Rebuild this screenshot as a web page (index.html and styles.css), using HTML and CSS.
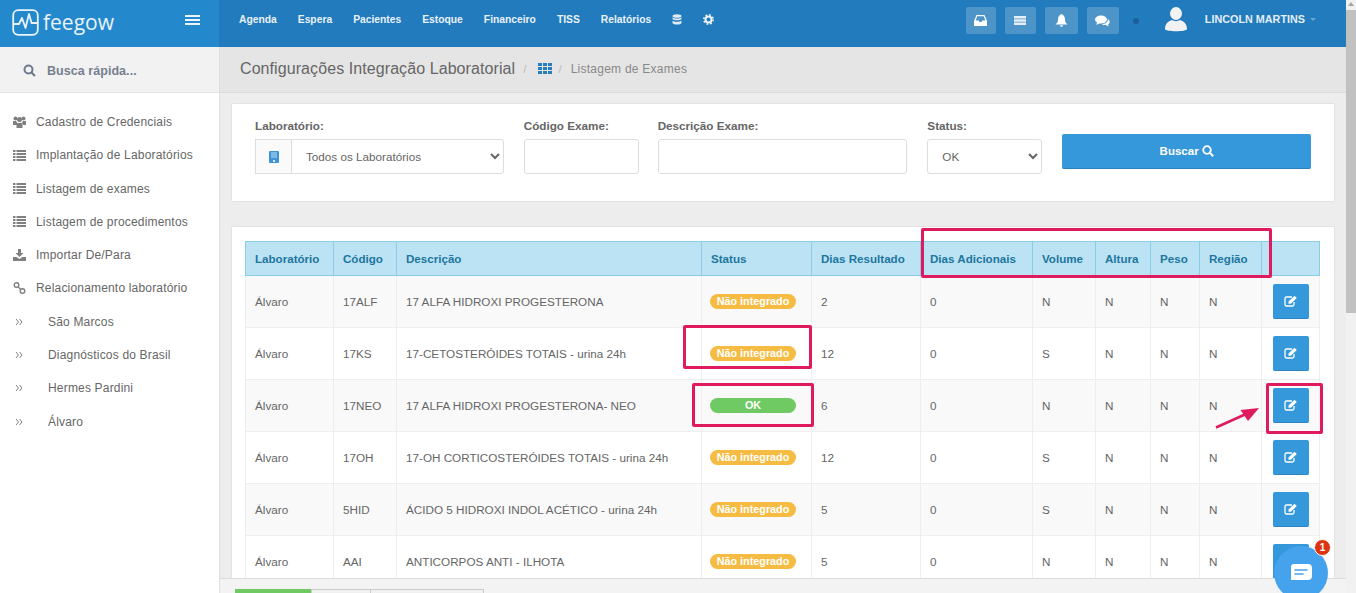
FILE: index.html
```html
<!DOCTYPE html>
<html lang="pt-BR">
<head>
<meta charset="utf-8">
<title>Listagem de Exames</title>
<link rel="stylesheet" href="styles.css">
</head>
<body>
<svg class="defs" width="0" height="0">
  <symbol id="i-list" viewBox="0 0 13 11"><path d="M0 0h2.5v2H0zM3.500 0H13v2H3.500zM0 3h2.500v2H0zM3.500 3H13v2H3.500zM0 6h2.500v2H0zM3.500 6H13v2H3.500zM0 9h2.500v2H0zM3.500 9H13v2H3.500z"/></symbol>
  <symbol id="i-edit" viewBox="0 0 14 12"><path d="M10 7v2.500A1.500 1.500 0 0 1 8.500 11h-6A1.500 1.500 0 0 1 1 9.500v-6A1.500 1.500 0 0 1 2.500 2H8" fill="none" stroke="currentColor" stroke-width="1.300"/><path d="M4.500 6.500 10.500 .8l2.300 2.200-6 5.800H4.500z" fill="currentColor"/></symbol>
  <symbol id="i-chev" viewBox="0 0 8 8"><path d="M1 1l2.500 3L1 7M4.500 1 7 4 4.500 7" fill="none" stroke="currentColor" stroke-width="1"/></symbol>
</svg>
<div class="app">
  <header class="topbar">
    <div class="brand">
      <div class="logo">
        <svg class="logo-mark" width="27" height="27" viewBox="0 0 27 27"><rect x="1.200" y="1.200" width="24.600" height="24.600" rx="5" fill="none" stroke="#e8f3fb" stroke-width="1.800"/><path d="M1 15h6l3-6 3.500 10 3.500-14 2.500 9H26" fill="none" stroke="#e8f3fb" stroke-width="1.800" stroke-linejoin="round"/></svg>
        <span class="logo-text">feegow</span>
      </div>
      <span class="burger"><i></i><i></i><i></i></span>
    </div>
    <nav class="topnav">
      <a>Agenda</a><a>Espera</a><a>Pacientes</a><a>Estoque</a><a>Financeiro</a><a>TISS</a><a>Relatórios</a>
      <svg width="10" height="11" viewBox="0 0 10 11" fill="#dfeaf4"><ellipse cx="5" cy="2" rx="4.500" ry="1.800"/><path d="M.5 3.300C1.500 5 8.500 5 9.500 3.300V5C8.500 6.700 1.500 6.700 .5 5zM.5 6.500C1.500 8.200 8.500 8.200 9.500 6.500V9C8.500 11 1.500 11 .5 9z"/></svg>
      <svg class="gear" width="11" height="11" viewBox="0 0 11 11"><circle cx="5.500" cy="5.500" r="3" fill="none" stroke="#eef4fa" stroke-width="2"/><circle cx="5.500" cy="5.500" r="4.700" fill="none" stroke="#eef4fa" stroke-width="1.500" stroke-dasharray="1.800 1.900"/></svg>
    </nav>
    <div class="top-actions">
      <span class="tbtn w30"><svg width="13" height="11" viewBox="0 0 13 11" fill="#fff"><path d="M2.500 0h8L13 6v5H0V6zM3.200 1.300 1.700 5.500h3L5.500 7h2l.8-1.500h3L9.800 1.300z"/></svg></span>
      <span class="tbtn w31"><svg width="12" height="9" viewBox="0 0 12 9" fill="#e4eff8"><path d="M0 0h12v2.500H0zM0 3.200h12v2.500H0zM0 6.500h12V9H0z"/></svg></span>
      <span class="tbtn w33"><svg width="13" height="13" viewBox="0 0 13 13" fill="#fff"><path d="M6.500 0C9 1 10 3 10 5.500c0 2.500 1 3.500 2.500 5H.5C2 9 3 8 3 5.500 3 3 4 1 6.500 0zM5 11.300h3A1.500 1.500 0 0 1 5 11.300z"/></svg></span>
      <span class="tbtn w32"><svg width="15" height="12" viewBox="0 0 15 12" fill="#fff"><ellipse cx="6" cy="4.500" rx="6" ry="4"/><path d="M2 7 1.500 10 5 8zM13 4c2.500 2 2 4.500 0 5.500l.8 2-3-1.500c-1.500 0-2.800 0-3.800-.8 3 0 6-2 6-5.200z"/></svg></span>
      <span class="dot"></span>
      <svg class="avatar" width="22" height="25" viewBox="0 0 22 25"><ellipse cx="11" cy="6.500" rx="6" ry="6.500" fill="#f2f2f2"/><path d="M0 22c0-6 4-8 7-9 2 1.500 6 1.500 8 0 3 1 7 3 7 9 0 3-22 3-22 0z" fill="#f2f2f2"/></svg>
      <span class="user">LINCOLN MARTINS</span>
      <span class="caret"></span>
    </div>
  </header>

  <div class="body">
    <aside class="sidebar">
      <div class="search">
        <svg width="13" height="13" viewBox="0 0 13 13"><circle cx="5.500" cy="5.500" r="4" fill="none" stroke="#6d7a8c" stroke-width="2"/><path d="M8.500 8.500 12 12" stroke="#6d7a8c" stroke-width="2.200"/></svg>
        <span>Busca rápida...</span>
      </div>
      <ul class="menu">
        <li><svg class="mi" width="13" height="12" viewBox="0 0 13 12" fill="#808080"><circle cx="2.500" cy="2.500" r="2"/><circle cx="10.500" cy="2.500" r="2"/><circle cx="6.500" cy="3.500" r="2.500"/><path d="M0 5h3l1 1.500V9H0zM13 5h-3L9 6.500V9h4zM4 7h5l.5 1v4h-6V8z"/></svg>Cadastro de Credenciais</li>
        <li><svg class="mi" width="13" height="11" fill="#808080"><use href="#i-list"/></svg>Implantação de Laboratórios</li>
        <li><svg class="mi" width="13" height="11" fill="#808080"><use href="#i-list"/></svg>Listagem de exames</li>
        <li><svg class="mi" width="13" height="11" fill="#808080"><use href="#i-list"/></svg>Listagem de procedimentos</li>
        <li><svg class="mi" width="13" height="12" viewBox="0 0 13 12" fill="#808080"><path d="M5 0h3v4h2.500L6.500 8 2.500 4H5zM0 8h3.500l3 2 3-2H13v4H0z"/></svg>Importar De/Para</li>
        <li><svg class="mi" width="13" height="12" viewBox="0 0 13 12" fill="none" stroke="#808080" stroke-width="1.400"><circle cx="3.500" cy="3" r="2.300"/><circle cx="9.500" cy="9" r="2.300"/><path d="M5 5l3 2.500"/></svg>Relacionamento laboratório</li>
        <li class="sub"><svg class="ch" width="8" height="8"><use href="#i-chev"/></svg>São Marcos</li>
        <li class="sub"><svg class="ch" width="8" height="8"><use href="#i-chev"/></svg>Diagnósticos do Brasil</li>
        <li class="sub"><svg class="ch" width="8" height="8"><use href="#i-chev"/></svg>Hermes Pardini</li>
        <li class="sub"><svg class="ch" width="8" height="8"><use href="#i-chev"/></svg>Álvaro</li>
      </ul>
    </aside>

    <main class="main">
      <div class="crumbs">
        <span class="crumb-title">Configurações Integração Laboratorial</span>
        <span class="crumb-sep sep-a">/</span>
        <svg class="crumb-grid" width="14" height="11" viewBox="0 0 14 11" fill="#2a7dbd"><path d="M0 0h4v3H0zM5 0h4v3H5zM10 0h4v3h-4zM0 4h4v3H0zM5 4h4v3H5zM10 4h4v3h-4zM0 8h4v3H0zM5 8h4v3H5zM10 8h4v3h-4z"/></svg>
        <span class="crumb-sep sep-b">/</span>
        <span class="crumb-last">Listagem de Exames</span>
      </div>
      <div class="content">
        <section class="card filters">
          <div class="field f-lab">
            <label>Laboratório:</label>
            <div class="group">
              <span class="addon"><svg width="10" height="12" viewBox="0 0 10 12"><rect width="10" height="12" rx="1" fill="#3f94d8"/><path d="M2 2h6M2 4h6M2 6h6" stroke="#bcdcf4" stroke-width="1"/><rect x="4" y="9" width="2" height="2" fill="#d6eafa"/></svg></span>
              <select class="ctl sel-group"><option>Todos os Laboratórios</option></select>
            </div>
          </div>
          <div class="field f-cod"><label>Código Exame:</label><input class="ctl" type="text"></div>
          <div class="field f-desc"><label>Descrição Exame:</label><input class="ctl" type="text"></div>
          <div class="field f-status"><label>Status:</label><select class="ctl"><option>OK</option></select></div>
          <button class="search-btn" type="button">Buscar <svg width="12" height="12" viewBox="0 0 12 12"><circle cx="5" cy="5" r="3.800" fill="none" stroke="#fff" stroke-width="1.800"/><path d="M7.800 7.800 11.200 11.200" stroke="#fff" stroke-width="2"/></svg></button>
        </section>

        <section class="card results">
          <table class="grid">
            <colgroup>
              <col class="c1"><col class="c2"><col class="c3"><col class="c4"><col class="c5"><col class="c6"><col class="c7"><col class="c8"><col class="c9"><col class="c10"><col class="c11">
            </colgroup>
            <thead>
              <tr><th>Laboratório</th><th>Código</th><th>Descrição</th><th>Status</th><th>Dias Resultado</th><th>Dias Adicionais</th><th>Volume</th><th>Altura</th><th>Peso</th><th>Região</th><th></th></tr>
            </thead>
            <tbody>
              <tr><td>Álvaro</td><td>17ALF</td><td>17 ALFA HIDROXI PROGESTERONA</td><td><span class="pill warn">Não integrado</span></td><td>2</td><td>0</td><td>N</td><td>N</td><td>N</td><td>N</td><td class="act"><span class="edit"><svg width="14" height="12"><use href="#i-edit"/></svg></span></td></tr>
              <tr><td>Álvaro</td><td>17KS</td><td>17-CETOSTERÓIDES TOTAIS - urina 24h</td><td><span class="pill warn">Não integrado</span></td><td>12</td><td>0</td><td>S</td><td>N</td><td>N</td><td>N</td><td class="act"><span class="edit"><svg width="14" height="12"><use href="#i-edit"/></svg></span></td></tr>
              <tr><td>Álvaro</td><td>17NEO</td><td>17 ALFA HIDROXI PROGESTERONA- NEO</td><td><span class="pill ok">OK</span></td><td>6</td><td>0</td><td>N</td><td>N</td><td>N</td><td>N</td><td class="act"><span class="edit"><svg width="14" height="12"><use href="#i-edit"/></svg></span></td></tr>
              <tr><td>Álvaro</td><td>17OH</td><td>17-OH CORTICOSTERÓIDES TOTAIS - urina 24h</td><td><span class="pill warn">Não integrado</span></td><td>12</td><td>0</td><td>S</td><td>N</td><td>N</td><td>N</td><td class="act"><span class="edit"><svg width="14" height="12"><use href="#i-edit"/></svg></span></td></tr>
              <tr><td>Álvaro</td><td>5HID</td><td>ÁCIDO 5 HIDROXI INDOL ACÉTICO - urina 24h</td><td><span class="pill warn">Não integrado</span></td><td>5</td><td>0</td><td>S</td><td>N</td><td>N</td><td>N</td><td class="act"><span class="edit"><svg width="14" height="12"><use href="#i-edit"/></svg></span></td></tr>
              <tr><td>Álvaro</td><td>AAI</td><td>ANTICORPOS ANTI - ILHOTA</td><td><span class="pill warn">Não integrado</span></td><td>5</td><td>0</td><td>N</td><td>N</td><td>N</td><td>N</td><td class="act"><span class="edit"><svg width="14" height="12"><use href="#i-edit"/></svg></span></td></tr>
            </tbody>
          </table>
        </section>
      </div>
      <div class="footbar">
        <span class="ft ft1"></span><span class="ft ft2"></span><span class="ft ft3"></span>
      </div>
    </main>
  </div>
</div>

<div class="scrollbar"><span class="sb-arrow"></span><span class="sb-thumb"></span></div>

<span class="mark m-head"></span>
<span class="mark m-nint"></span>
<span class="mark m-ok"></span>
<span class="mark m-edit"></span>
<svg class="arrow" width="46" height="24" viewBox="0 0 46 24"><path d="M1 22.500 31 9" stroke="#e01a5f" stroke-width="2.500"/><path d="M44 3 25.500 5 33 16z" fill="#e01a5f"/></svg>

<div class="chat">
  <svg width="24" height="18" viewBox="0 0 24 18"><path d="M5 1h14a4 4 0 0 1 4 4v8a4 4 0 0 1-4 4H3c-1 0-1.500-.5-1-1.500.3-.8 0-1.500 0-2.500V4a3 3 0 0 1 3-3z" fill="#fff"/><path d="M6 7h12M6 11h8" stroke="#45a2ec" stroke-width="1.600" stroke-linecap="round"/></svg>
  <span class="chat-badge">1</span>
</div>
</body>
</html>
```
FILE: styles.css
```css
* { box-sizing: border-box; }
html, body { margin: 0; height: 100%; overflow: hidden; }
body { font-family: "Liberation Sans", Arial, sans-serif; color: #666; font-size: 11.700px; background: #ededed; }
.defs { position: absolute; }
.app { width: 1346px; height: 593px; display: flex; flex-direction: column; overflow: hidden; }

.topbar { height: 47px; flex: none; display: flex; background: #217bbc; color: #fff; }
.brand { width: 219px; flex: none; background: #2488cd; display: flex; align-items: center; justify-content: space-between; padding: 0 19px 0 12px; }
.logo { display: flex; align-items: center; gap: 4px; margin-top: -2px; }
.logo-text { font-family: "Open Sans", sans-serif; font-size: 21px; line-height: 27px; color: #e8f3fb; margin-top: -1px; }
.burger { display: flex; flex-direction: column; gap: 2px; margin-top: -8px; }
.burger i { display: block; width: 15px; height: 2px; background: #eef5fb; }
.topnav { display: flex; align-items: center; gap: 21px; padding-left: 20px; font-size: 10.300px; font-weight: 700; color: #e9f1f8; margin-top: -9px; }
.topnav a { white-space: nowrap; }
.top-actions { margin-left: auto; display: flex; align-items: center; padding-right: 30px; }
.tbtn { height: 27px; display: flex; align-items: center; justify-content: center; background: rgba(255,255,255,.2); border-radius: 2px; margin-right: 9px; margin-top: -6px; }
.w30 { width: 30px; } .w31 { width: 31px; } .w33 { width: 33px; } .w32 { width: 32px; }
.dot { width: 6px; height: 6px; border-radius: 50%; background: #1b5f97; margin: -6px 0 0 5px; }
.avatar { margin: -8px 0 0 26px; }
.user { font-size: 10.800px; font-weight: 700; color: #e3eef7; margin: -9px 0 0 18px; white-space: nowrap; }
.caret { width: 0; height: 0; border: 3px solid transparent; border-top-color: #6aa6d3; margin: -6px 0 0 5px; }

.body { flex: 1; display: flex; min-height: 0; }
.sidebar { width: 220px; flex: none; background: #fff; border-right: 1px solid #e0e0e0; }
.search { height: 46px; background: #f2f2f2; border-bottom: 1px solid #e4e4e4; display: flex; align-items: center; gap: 11px; padding: 2px 0 0 23px; font-size: 12.500px; font-weight: 700; color: #76808f; letter-spacing: .05px; }
.menu { list-style: none; margin: 0; padding: 12.300px 0 0 13px; }
.menu li { height: 33.300px; display: flex; align-items: center; font-size: 12px; letter-spacing: .18px; color: #666; white-space: nowrap; }
.mi { margin-right: 10px; flex: none; }
.sub .ch { margin: 0 25px 0 2px; color: #808080; flex: none; }

.main { flex: 1; min-width: 0; display: flex; flex-direction: column; position: relative; }
.crumbs { height: 46px; flex: none; background: #e5e5e5; border-bottom: 1px solid #dcdcdc; display: flex; align-items: center; gap: 8px; padding: 0 0 2px 20px; }
.crumb-title { font-size: 16px; color: #666; letter-spacing: .08px; }
.crumb-sep { color: #bbb; }
.sep-a { margin-right: 4px; }
.crumb-grid { margin-right: -2px; }
.sep-b { margin-right: 1px; }
.crumb-last { font-size: 12px; color: #888; letter-spacing: .25px; }
.content { flex: 1; padding: 10px 11px 0 11px; overflow: hidden; }
.card { background: #fff; border: 1px solid #e2e2e2; border-radius: 2px; }
.filters { height: 99px; display: flex; align-items: flex-start; padding: 15px 23px 0 23px; margin-bottom: 24px; }
.field { display: flex; flex-direction: column; }
.field label { font-weight: 700; color: #666; height: 20px; line-height: 14px; }
.f-lab { width: 249px; margin-right: 20px; }
.f-cod { width: 115px; margin-right: 19px; }
.f-desc { width: 250px; margin-right: 20px; }
.f-status { width: 115px; margin-right: 20px; }
.ctl { height: 35px; width: 100%; border: 1px solid #ddd; border-radius: 3px; background: #fff; font: 11.700px "Liberation Sans", Arial, sans-serif; color: #666; padding: 0 10px; }
.group { display: flex; }
.addon { width: 36px; height: 35px; flex: none; display: flex; align-items: center; justify-content: center; background: #fafafa; border: 1px solid #ddd; border-right: 0; }
.sel-group { border-radius: 0 3px 3px 0; min-width: 0; flex: 1; }
.search-btn { width: 249px; height: 35px; margin-top: 15px; background: #3498db; border: 0; border-bottom: 1px solid #2a80ba; border-radius: 2px; color: #fff; font: 700 11.500px "Liberation Sans", Arial, sans-serif; display: flex; align-items: center; justify-content: center; gap: 3px; padding-bottom: 2px; }

.results { padding: 14px 13px 0 13px; height: 400px; }
.grid { border-collapse: collapse; table-layout: fixed; width: 1074px; }
.c1 { width: 88px; } .c2 { width: 63px; } .c3 { width: 305px; } .c4 { width: 110px; } .c5 { width: 109px; } .c6 { width: 112px; } .c7 { width: 63px; } .c8 { width: 55px; } .c9 { width: 49px; } .c10 { width: 62px; } .c11 { width: 58px; }
.grid th { height: 34px; background: #bce3f3; border: 1px solid #8ccde6; color: #20769f; font-size: 11.600px; font-weight: 700; text-align: left; padding: 0 9px; white-space: nowrap; }
.grid td { height: 52px; border: 1px solid #eee; padding: 0 9px; color: #666; white-space: nowrap; overflow: hidden; }
.grid tbody tr:nth-child(odd) td { background: #f9f9f9; }
.act { padding: 0 !important; text-align: left; }
.edit { display: flex; width: 36px; height: 35px; margin-left: 11px; align-items: center; justify-content: center; background: #3498db; border-radius: 2px; border-bottom: 1px solid #2d86c2; color: #fff; }
.pill { display: block; width: 86px; height: 15px; margin-left: -1px; border-radius: 8px; color: #fff; font-size: 10.800px; font-weight: 700; line-height: 15px; text-align: center; }
.warn { background: #f6bb42; }
.ok { background: #70ca63; }

.footbar { position: absolute; left: 0; right: 0; bottom: 0; height: 15px; background: #f3f3f3; border-top: 1px solid #dcdcdc; display: flex; align-items: flex-end; padding-left: 15px; }
.ft { height: 4px; border: 1px solid #ccc; border-bottom: 0; display: block; }
.ft1 { width: 76px; background: #70ca63; border-color: #70ca63; }
.ft2 { width: 60px; background: #f0f0f0; }
.ft3 { width: 113px; background: #f0f0f0; border-left: 0; }

.scrollbar { position: fixed; top: 0; right: 0; bottom: 0; width: 10px; background: #f1f1f1; }
.sb-arrow { display: block; width: 0; height: 0; margin: 2px auto 0; border: 3px solid transparent; border-top: 0; border-bottom: 4px solid #a3a3a3; }
.sb-thumb { display: block; margin-top: 4px; height: 303px; background: #c1c1c1; }

.mark { position: fixed; border: 3px solid #e01a5f; border-radius: 2px; background: transparent; }
.m-head { left: 921px; top: 228px; width: 351px; height: 50px; }
.m-nint { left: 683px; top: 325px; width: 129px; height: 44px; }
.m-ok { left: 692px; top: 383px; width: 122px; height: 44px; }
.m-edit { left: 1266px; top: 383px; width: 57px; height: 51px; }
.arrow { position: fixed; left: 1215px; top: 405px; }

.chat { position: fixed; left: 1274px; top: 546px; width: 54px; height: 54px; border-radius: 50%; background: #45a2ec; display: flex; align-items: center; justify-content: center; padding-bottom: 2px; }
.chat-badge { position: absolute; left: 40px; top: -7px; width: 17px; height: 17px; border-radius: 50%; background: #dd3310; border: 1px solid #fff; color: #fff; font-size: 10px; font-weight: 700; text-align: center; line-height: 15px; }
```
